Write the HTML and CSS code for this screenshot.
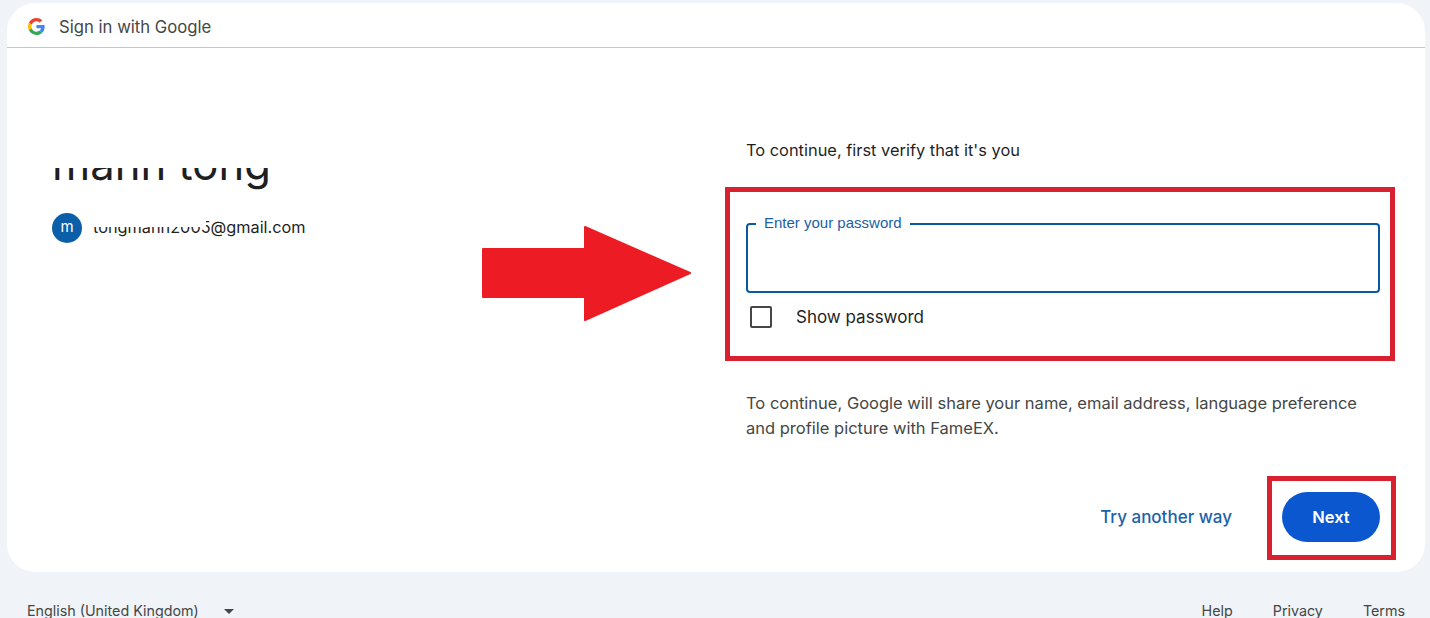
FILE: index.html
```html
<!DOCTYPE html>
<html lang="en">
  <head>
    <meta charset="UTF-8" />
    <meta name="viewport" content="width=device-width, initial-scale=1.0" />
    <title>Sign in with Google</title>
    <link rel="stylesheet" href="styles.css">
  </head>
  <body>
    <div class="card">
      <div class="card-header">
        <svg class="g-logo" viewBox="0 0 48 48" width="17" height="17">
          <path fill="#ea4335" d="M24 9.5c3.500 0 6.700 1.200 9.200 3.600l6.900-6.900C35.900 2.400 30.500 0 24 0 14.600 0 6.500 5.400 2.600 13.200l8 6.200C12.500 13.600 17.800 9.500 24 9.500z"/>
          <path fill="#4285f4" d="M46.900 24.500c0-1.600-.1-3.100-.4-4.500H24v9h12.900c-.6 3-2.200 5.500-4.700 7.200l7.700 6c4.500-4.200 7-10.300 7-17.700z"/>
          <path fill="#fbbc05" d="M10.500 28.600c-.5-1.400-.8-3-.8-4.600s.3-3.200.8-4.600l-8-6.200C.9 16.500 0 20.100 0 24s.9 7.500 2.600 10.800l7.900-6.200z"/>
          <path fill="#34a853" d="M24 48c6.500 0 11.900-2.100 15.900-5.800l-7.700-6c-2.200 1.400-4.900 2.300-8.200 2.300-6.200 0-11.500-4.200-13.400-9.800l-8 6.200C6.500 42.600 14.600 48 24 48z"/>
        </svg>
        <span class="header-title">Sign in with Google</span>
      </div>

      <div class="card-body">
        <!-- Lewa kolumna: nazwa i konto -->
        <div class="account-col">
          <div class="name-clip">
            <h1 class="account-name">manh tong</h1>
          </div>
          <div class="account-row">
            <span class="avatar">m</span>
            <span class="account-email">tongmanh2005@gmail.com</span>
            <span class="email-mask"></span>
          </div>
        </div>

        <!-- Prawa kolumna: formularz -->
        <div class="form-col">
          <p class="intro">To continue, first verify that it's you</p>
          <div class="password-field">
            <span class="field-label">Enter your password</span>
          </div>
          <div class="show-row">
            <span class="checkbox"></span>
            <span class="show-label">Show password</span>
          </div>
          <p class="share-note">To continue, Google will share your name, email address, language preference and profile picture with FameEX.</p>
          <div class="actions">
            <a class="try-link">Try another way</a>
            <button class="next-btn">Next</button>
          </div>
        </div>
      </div>

      <!-- Adnotacje na zrzucie -->
      <svg class="arrow" viewBox="0 0 212 98" width="212" height="98">
        <path fill="#ed1c24" stroke="#ed1c24" stroke-width="2" stroke-linejoin="round" d="M2 24H104V2L209 48L104 95V72H2z"/>
      </svg>
      <div class="mark mark-form"></div>
      <div class="mark mark-next"></div>
    </div>

    <div class="footer">
      <div class="lang">
        <span>English (United Kingdom)</span>
        <span class="caret"></span>
      </div>
      <div class="footer-links">
        <a>Help</a>
        <a>Privacy</a>
        <a>Terms</a>
      </div>
    </div>
  </body>
</html>
```

FILE: styles.css
```css
html,
body {
  height: 618px;
  overflow: hidden;
}

body {
  margin: 0;
  padding: 3px 5px 0 7px;
  background: #f0f4f9;
  font-family: Inter, Roboto, sans-serif;
  color: #1f1f1f;
}

.card {
  position: relative;
  height: 569px;
  background: #fff;
  border-radius: 28px;
}

.card-header {
  display: flex;
  align-items: center;
  gap: 14px;
  height: 44px;
  padding-left: 21px;
  border-bottom: 1px solid #c4c7c5;
}

.g-logo {
  position: relative;
  top: 1px;
}

.header-title {
  position: relative;
  top: 2px;
  font-size: 16.7px;
  color: #444746;
}

.card-body {
  display: flex;
}

.account-col {
  width: 739px;
  padding: 117px 0 0 45px;
  box-sizing: border-box;
}

.name-clip {
  height: 19px;
  margin-top: 3px;
  padding-bottom: 3px;
  overflow: hidden;
  display: flex;
  align-items: flex-end;
}

.account-name {
  margin: 0;
  font-size: 43.6px;
  font-weight: 400;
  line-height: 44px;
  white-space: nowrap;
}

.account-row {
  position: relative;
  display: flex;
  align-items: center;
  gap: 11px;
  margin-top: 23px;
}

.avatar {
  width: 30px;
  height: 30px;
  border-radius: 50%;
  background: #0b5ea8;
  color: #fff;
  font-size: 15px;
  line-height: 28px;
  text-align: center;
}

.account-email {
  padding-bottom: 2px;
  font-size: 16.3px;
  color: #1f1f1f;
}

.email-mask {
  position: absolute;
  left: 38px;
  top: 0;
  width: 116px;
  height: 14px;
  background: #fff;
}

.form-col {
  width: 634px;
  padding-top: 90px;
}

.intro {
  margin: 0;
  height: 24px;
  font-size: 16.4px;
  line-height: 24px;
}

.password-field {
  position: relative;
  height: 66px;
  margin-top: 61px;
  border: 2px solid #0b57a0;
  border-radius: 4px;
}

.field-label {
  position: absolute;
  left: 8px;
  top: -12px;
  padding: 0 8px;
  background: #fff;
  font-family: "Liberation Sans", Arial, sans-serif;
  font-size: 15px;
  line-height: 20px;
  color: #1a5fa8;
}

.show-row {
  display: flex;
  align-items: center;
  height: 48px;
  padding-left: 4px;
}

.checkbox {
  width: 18px;
  height: 18px;
  border: 2px solid #444746;
  border-radius: 2px;
}

.show-label {
  margin-left: 24px;
  font-size: 17px;
  font-weight: 400;
}

.share-note {
  margin: 50px 0 0;
  font-size: 16.5px;
  line-height: 25px;
  color: #444746;
}

.actions {
  display: flex;
  align-items: center;
  justify-content: flex-end;
  gap: 50px;
  margin-top: 51px;
}

.try-link {
  font-size: 17px;
  font-weight: 500;
  color: #1a62ad;
}

.next-btn {
  width: 98px;
  height: 50px;
  border: none;
  border-radius: 25px;
  background: #0b57d0;
  color: #fff;
  font-family: inherit;
  font-size: 16.5px;
  font-weight: 600;
}

.arrow {
  position: absolute;
  left: 474px;
  top: 222px;
}

.mark {
  position: absolute;
  box-sizing: border-box;
  border: 5px solid #d9202e;
}

.mark-form {
  left: 718px;
  top: 184px;
  width: 670px;
  height: 174px;
}

.mark-next {
  left: 1260px;
  top: 473px;
  width: 129px;
  height: 84px;
}

.footer {
  display: flex;
  justify-content: space-between;
  padding: 29px 20px 0;
  font-size: 14.3px;
  line-height: 20px;
  color: #444746;
}

.lang {
  display: flex;
  align-items: center;
  gap: 25px;
}

.caret {
  width: 0;
  height: 0;
  border-left: 5px solid transparent;
  border-right: 5px solid transparent;
  border-top: 5px solid #444746;
}

.footer-links {
  display: flex;
  gap: 40px;
}
```
